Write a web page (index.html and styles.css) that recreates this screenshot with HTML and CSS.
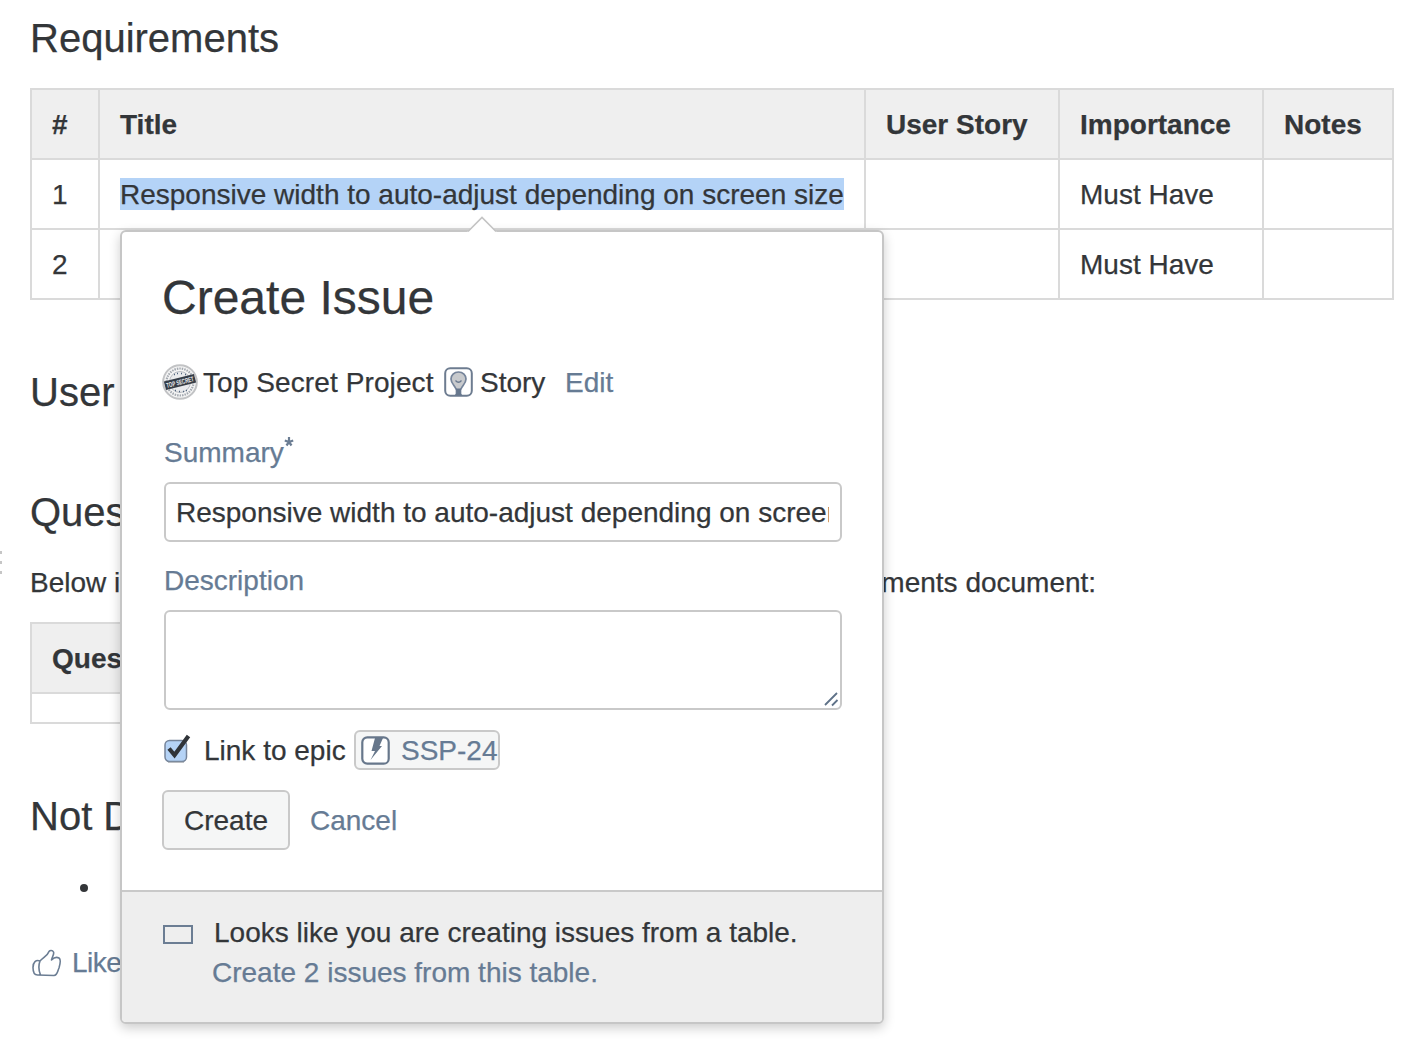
FILE: index.html
```html
<!DOCTYPE html>
<html lang="en">
<head>
<meta charset="utf-8">
<title>Requirements</title>
<link rel="stylesheet" href="styles.css">
</head>
<body>
<main class="page">
  <h2 class="first">Requirements</h2>
  <table class="grid requirements">
    <colgroup><col class="c-num"><col class="c-title"><col class="c-story"><col class="c-imp"><col class="c-notes"></colgroup>
    <thead><tr><th>#</th><th>Title</th><th>User Story</th><th>Importance</th><th>Notes</th></tr></thead>
    <tbody>
      <tr><td>1</td><td><span class="selected">Responsive width to auto-adjust depending on screen size</span></td><td></td><td>Must Have</td><td></td></tr>
      <tr><td>2</td><td></td><td></td><td>Must Have</td><td></td></tr>
    </tbody>
  </table>
  <h2 class="after-table">User interaction</h2>
  <h2 class="after-heading">Questions</h2>
  <p class="intro">Below is a list of questions to be addressed as a result of this requirements document:</p>
  <table class="grid questions">
    <thead><tr><th>Question</th><th>Outcome</th></tr></thead>
    <tbody><tr><td></td><td></td></tr></tbody>
  </table>
  <h2 class="after-table">Not Doing</h2>
  <div class="bullet-line"><span class="dot"></span></div>
  <a class="like">
    <svg width="30" height="28" viewBox="0 0 30 28" fill="none" stroke="#6b7d93" stroke-width="1.6" stroke-linejoin="round" stroke-linecap="round"><path d="M8 12C4 10.500 1 13 1 18.500C1 23 2.500 26 5.500 26L22 26.500C25.500 26.500 25.500 22 27 19C28.500 14 28.500 10 27 9C25 8 22 8.500 19.500 11C20 8 22.500 5 21.500 3C20.500 1 18 1 17 2.500C15.500 7 11 8.500 8 12C6.500 16 6.500 21 8.500 26"/></svg>
    <span>Like</span>
  </a>
</main>

<div class="drag-handle"><i></i><i></i><i></i></div>

<section class="dialog">
  <svg class="arrow" width="30" height="18" viewBox="0 0 30 18"><path d="M0 18V16L2 15L15 2L28 15L30 16V18Z" fill="#fff"/><path d="M1 15.500L15 1.500L29 15.500" fill="none" stroke="#c4c4c4" stroke-width="1.600"/></svg>
  <div class="body">
    <h1>Create Issue</h1>
    <div class="context">
      <svg class="stamp" width="36" height="36" viewBox="0 0 36 36"><circle cx="18" cy="18" r="16.800" fill="#f5f5f5" stroke="#c2c3c5" stroke-width="2"/><circle cx="18" cy="18" r="13.500" fill="none" stroke="#a4a9b0" stroke-width="2.200" stroke-dasharray="1.500 1"/><circle cx="18" cy="18" r="10.500" fill="#e9eaec" stroke="#b8bcc2" stroke-width="1"/><path d="M12 10.500h1m2-1h1m3 0h1m3 1h1M13 26.500h1m3 1h1m3 0h1m2-1h1" stroke="#52667f" stroke-width="1.300"/><g transform="rotate(-14 18 18)"><rect x="2.500" y="13.500" width="31" height="9" fill="#353c46"/><text x="18" y="20.700" text-anchor="middle" textLength="28" lengthAdjust="spacingAndGlyphs" class="stamp-text">TOP SECRET</text></g></svg>
      <span class="project">Top Secret Project</span>
      <svg class="story" width="29" height="30" viewBox="0 0 29 30"><rect x="1.200" y="1.200" width="26.600" height="27.600" rx="5" fill="#fff" stroke="#6d7c90" stroke-width="2"/><path d="M14.500 5C10 5 7 8.300 7 12C7 16.500 11 18.500 12.500 23V27H16.500V23C18 18.500 22 16.500 22 12C22 8.300 19 5 14.500 5Z" fill="#c8cacd" stroke="#75849a" stroke-width="1.700"/><path d="M12 21.500H17L16.500 26L18.500 28.500H10.500L12.500 26Z" fill="#66778d"/><path d="M11.500 13.500Q14.500 17 17.500 13.500" fill="none" stroke="#68788e" stroke-width="1.300"/></svg>
      <span class="type">Story</span>
      <a class="edit">Edit</a>
    </div>
    <div class="label summary-label"><span>Summary</span><svg width="10" height="12" viewBox="0 0 10 12"><path d="M5 1V6M.8 4.500L5 6L9.200 4.500M2.500 9.500L5 6L7.500 9.500" fill="none" stroke="#6b7d93" stroke-width="2.200"/></svg></div>
    <div class="field input"><div class="clip">Responsive width to auto-adjust depending on screen size</div></div>
    <div class="label description-label"><span>Description</span></div>
    <div class="field textarea"><svg width="16" height="16" viewBox="0 0 16 16" stroke="#5f7288" stroke-width="1.800"><path d="M1 13L13 1M8 13.500L13.500 8"/></svg></div>
    <div class="epic">
      <svg class="check" width="28" height="30" viewBox="0 0 28 30"><rect x="1" y="7.500" width="21.500" height="21" rx="4.500" fill="#b5d3f6" stroke="#75849a" stroke-width="1.500"/><path d="M4 29.400H20" stroke="#b5b8bc" stroke-width="1"/><path d="M5 15.500L10.500 22L24.500 3" fill="none" stroke="#303439" stroke-width="4.200"/></svg>
      <span class="epic-text">Link to epic</span>
      <span class="pill"><svg width="29" height="29" viewBox="0 0 29 29"><rect x="1.300" y="1.300" width="26.400" height="26.400" rx="5" fill="#fff" stroke="#67778b" stroke-width="2.200"/><path d="M14 2H22L18.500 10H21L9.500 24L14 15H10.500Z" fill="#67778b"/></svg><span>SSP-24</span></span>
    </div>
    <div class="actions"><button class="create">Create</button><a>Cancel</a></div>
  </div>
  <footer>
    <span class="empty-box"></span>
    <div class="hint"><div class="hint-text">Looks like you are creating issues from a table.</div><a>Create 2 issues from this table.</a></div>
  </footer>
</section>
</body>
</html>
```
FILE: styles.css
```css
* { box-sizing: border-box; }
html, body { margin: 0; height: 1048px; overflow: hidden; }
body {
  background: #fff;
  color: #333639;
  font: 28px/40px "Liberation Sans", Arial, sans-serif;
  -webkit-text-stroke: .25px currentColor;
  position: relative;
}
h1, h2, p { margin: 0; font-weight: 400; white-space: nowrap; }
a { color: #667b94; }
svg { display: block; flex: none; }

.page { padding: 14px 30px 0; }
h2 { font-size: 40px; line-height: 48px; }
h2.first { margin-bottom: 26px; }
h2.after-table { margin-top: 68px; }
h2.after-heading { margin-top: 72px; margin-bottom: 27px; }
.intro { margin-bottom: 19px; }

.grid { border-collapse: collapse; table-layout: fixed; }
.grid th, .grid td {
  border: 2px solid #dadada;
  padding: 2px 20px 0;
  height: 70px;
  text-align: left;
  white-space: nowrap;
}
.grid th { background: #efefef; font-weight: 700; }
.requirements { width: 1364px; }
.c-num { width: 68px; }
.c-title { width: 766px; }
.c-story { width: 194px; }
.c-imp { width: 204px; }
.c-notes { width: 130px; }
.questions { width: 520px; }
.grid.questions td { height: 30px; }
.selected { padding-top: 1px; background: #b4d3f7; }

.bullet-line { display: flex; align-items: center; height: 40px; margin-top: 28px; padding-left: 50px; }
.dot { width: 8px; height: 8px; border-radius: 50%; background: #333639; }
.like { display: flex; align-items: center; gap: 10px; margin-top: 35px; padding-left: 2px; letter-spacing: -.5px; }

.drag-handle { position: absolute; left: 0; top: 551px; display: grid; gap: 7px; }
.drag-handle i { width: 2px; height: 3px; background: #c6c6c6; }

.dialog {
  position: absolute;
  left: 120px;
  top: 230px;
  width: 764px;
  height: 794px;
  display: flex;
  flex-direction: column;
  background: #fff;
  border: 2px solid #c6c6c6;
  border-radius: 6px;
  box-shadow: 0 4px 12px rgba(0, 0, 0, .2);
}
.arrow { position: absolute; left: 345px; top: -16px; }
.body { height: 658px; padding: 38px 40px 0; }
h1 { font-size: 48px; line-height: 56px; }
.context { display: flex; align-items: center; height: 40px; margin-top: 36px; white-space: nowrap; }
.project, .type, .edit, .epic-text, .pill span, .actions a { padding-top: 1px; }
.project { margin-left: 5px; width: 231px; letter-spacing: .1px; }
.story { margin-left: 10px; }
.type { margin-left: 7px; width: 65px; }
.edit { margin-left: 20px; }
.stamp-text { font: bold 7px "Liberation Sans", Arial, sans-serif; fill: #eceef0; -webkit-text-stroke: 0; }
.label { display: flex; height: 40px; margin-left: 2px; color: #667b94; }
.summary-label { margin-top: 31px; }
.summary-label svg { margin-top: 3px; }
.field { border: 2px solid #c9c9c9; border-radius: 6px; width: 678px; margin-left: 2px; }
.input { height: 60px; margin-top: 9px; padding: 9px 11px 0 10px; }
.clip { overflow: hidden; white-space: nowrap; }
.description-label { margin-top: 19px; }
.textarea { height: 100px; margin-top: 9px; display: flex; align-items: flex-end; justify-content: flex-end; }
.epic { display: flex; align-items: center; height: 40px; margin-top: 20px; white-space: nowrap; }
.check { margin: -4px 0 0 2px; }
.epic-text { margin-left: 12px; width: 142px; }
.pill {
  display: flex;
  align-items: center;
  gap: 11px;
  width: 146px;
  height: 40px;
  margin-left: 8px;
  padding-left: 5px;
  border: 2px solid #c9c9c9;
  border-radius: 6px;
  background: #f5f6f6;
  color: #667b94;
}
.actions { display: flex; align-items: center; gap: 20px; margin-top: 20px; }
.create {
  width: 128px;
  height: 60px;
  padding: 1px 0 0;
  border: 2px solid #c9c9c9;
  border-radius: 6px;
  background: #f5f6f6;
  color: #333639;
  font: inherit;
}
footer {
  flex: 1;
  display: flex;
  padding: 21px 0 0 41px;
  border-top: 2px solid #c9c9c9;
  border-radius: 0 0 4px 4px;
  background: #eee;
}
.empty-box { width: 30px; height: 19px; margin-top: 12px; border: 2px solid #6b7d93; }
.hint { margin-left: 19px; white-space: nowrap; }
.hint-text { padding-left: 2px; }
```
